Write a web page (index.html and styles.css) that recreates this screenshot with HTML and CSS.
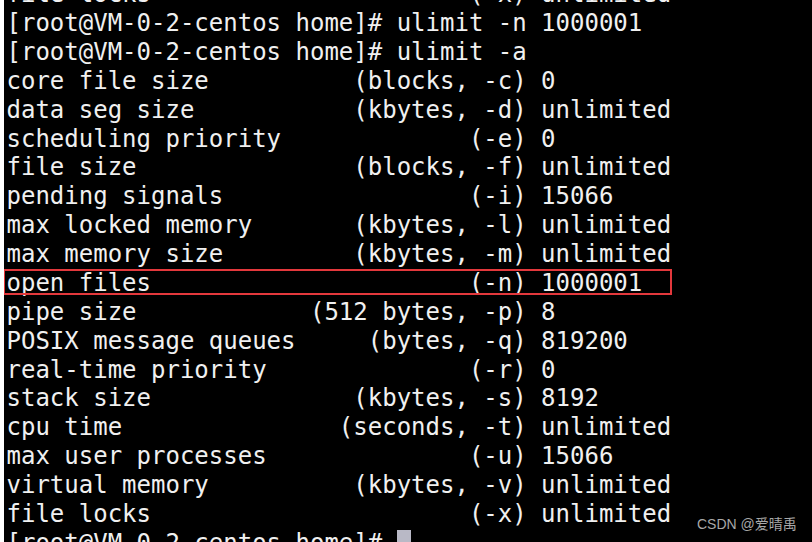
FILE: index.html
```
<!DOCTYPE html>
<html>
<head>
<meta charset="utf-8">
<link rel="stylesheet" href="styles.css">
</head>
<body>
<div class="term">
<div class="screen">
<div class="row">file locks                      (-x) unlimited</div>
<div class="row">[root@VM-0-2-centos home]# ulimit -n 1000001</div>
<div class="row">[root@VM-0-2-centos home]# ulimit -a</div>
<div class="row">core file size          (blocks, -c) 0</div>
<div class="row">data seg size           (kbytes, -d) unlimited</div>
<div class="row">scheduling priority             (-e) 0</div>
<div class="row">file size               (blocks, -f) unlimited</div>
<div class="row">pending signals                 (-i) 15066</div>
<div class="row">max locked memory       (kbytes, -l) unlimited</div>
<div class="row">max memory size         (kbytes, -m) unlimited</div>
<div class="row"><span class="hl">open files                      (-n) 1000001</span></div>
<div class="row">pipe size            (512 bytes, -p) 8</div>
<div class="row">POSIX message queues     (bytes, -q) 819200</div>
<div class="row">real-time priority              (-r) 0</div>
<div class="row">stack size              (kbytes, -s) 8192</div>
<div class="row">cpu time               (seconds, -t) unlimited</div>
<div class="row">max user processes              (-u) 15066</div>
<div class="row">virtual memory          (kbytes, -v) unlimited</div>
<div class="row">file locks                      (-x) unlimited</div>
<div class="row">[root@VM-0-2-centos home]# <span class="cursor"> </span></div>
</div>
<div class="mark">CSDN @爱晴禹</div>
</div>
</body>
</html>
```
FILE: styles.css
```
html, body {
  margin: 0;
  padding: 0;
  background: #ffffff;
}
.term {
  position: relative;
  margin-left: 4px;
  width: 808px;
  height: 542px;
  background: #000000;
  overflow: hidden;
}
.screen {
  margin: -19.8px 0 0 0;
  padding: 0 0 0 2.5px;
  font-family: "DejaVu Sans Mono", monospace;
  font-size: 24px;
  line-height: 28.88px;
  color: #f0f0f0;
}
.row {
  height: 28.88px;
  white-space: pre;
}
.hl {
  position: relative;
  display: inline-block;
}
.hl::after {
  content: "";
  position: absolute;
  left: -3.5px;
  top: 0;
  width: 669px;
  height: 26px;
  border: 2.5px solid #e3383c;
  box-sizing: border-box;
}
.cursor {
  display: inline-block;
  width: 14px;
  height: 26px;
  vertical-align: top;
  margin-top: 1.5px;
  background: #b9b9c6;
}
.mark {
  position: absolute;
  left: 693px;
  top: 514px;
  font-family: "Liberation Sans", "Noto Sans CJK SC", sans-serif;
  font-size: 14px;
  line-height: 20px;
  color: #a8a8a8;
}
```
